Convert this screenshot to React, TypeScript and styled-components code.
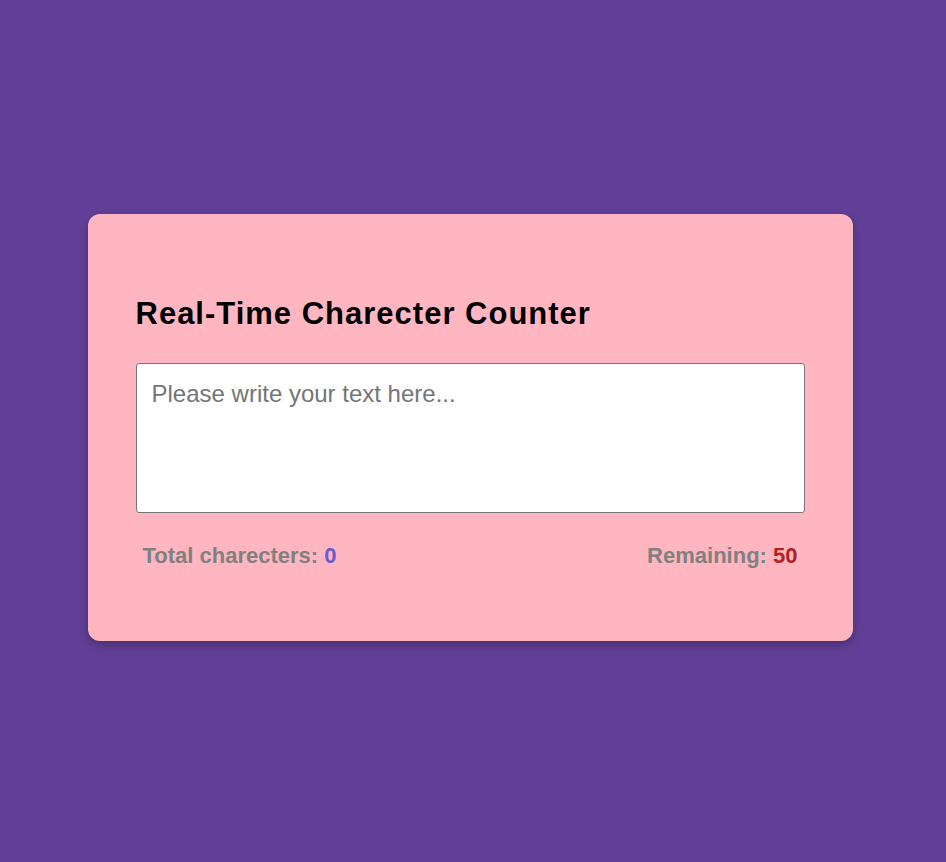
import React, { useState } from "react";
import styled, { createGlobalStyle } from "styled-components";

const GlobalStyle = createGlobalStyle`
  html, body {
    margin: 0;
    padding: 0;
    background-color: #613f96;
  }
  * {
    box-sizing: border-box;
  }
`;

const Page = styled.main`
  display: flex;
  align-items: center;
  justify-content: center;
  min-height: 100vh;
  padding: 0 6px 7px 0;
  font-family: "Liberation Sans", Arial, sans-serif;
`;

const Card = styled.section`
  width: 765px;
  padding: 82px 48px 72px 48px;
  background-color: #ffb6c1;
  border-radius: 12px;
  box-shadow: 0 4px 8px rgba(0, 0, 0, 0.25);
`;

const Title = styled.h1`
  margin: 0 0 31px 0;
  font-size: 31px;
  font-weight: 700;
  color: #000;
  letter-spacing: 1px;
`;

const TextArea = styled.textarea`
  display: block;
  width: 100%;
  height: 150px;
  padding: 16px 15px;
  border: 1px solid #767676;
  border-radius: 3px;
  font-family: "Liberation Sans", Arial, sans-serif;
  font-size: 24px;
  resize: none;
  outline: none;

  &::placeholder {
    color: #757575;
  }
`;

const Stats = styled.div`
  display: flex;
  justify-content: space-between;
  padding: 0 7px;
  margin-top: 30px;
`;

const Stat = styled.p`
  margin: 0;
  font-size: 22px;
  font-weight: 700;
  color: #808080;
`;

const Count = styled.span<{ $tone: string }>`
  color: ${({ $tone }) => $tone};
`;

const LIMIT = 50;

export default function App() {
  const [text, setText] = useState("");

  return (
    <>
      <GlobalStyle />
      <Page>
        <Card>
          <Title>Real-Time Charecter Counter</Title>
          <TextArea
            placeholder="Please write your text here..."
            maxLength={LIMIT}
            value={text}
            onChange={(e) => setText(e.target.value)}
          />
          <Stats>
            <Stat>
              Total charecters: <Count $tone="#6a5acd">{text.length}</Count>
            </Stat>
            <Stat>
              Remaining: <Count $tone="#b22222">{LIMIT - text.length}</Count>
            </Stat>
          </Stats>
        </Card>
      </Page>
    </>
  );
}
